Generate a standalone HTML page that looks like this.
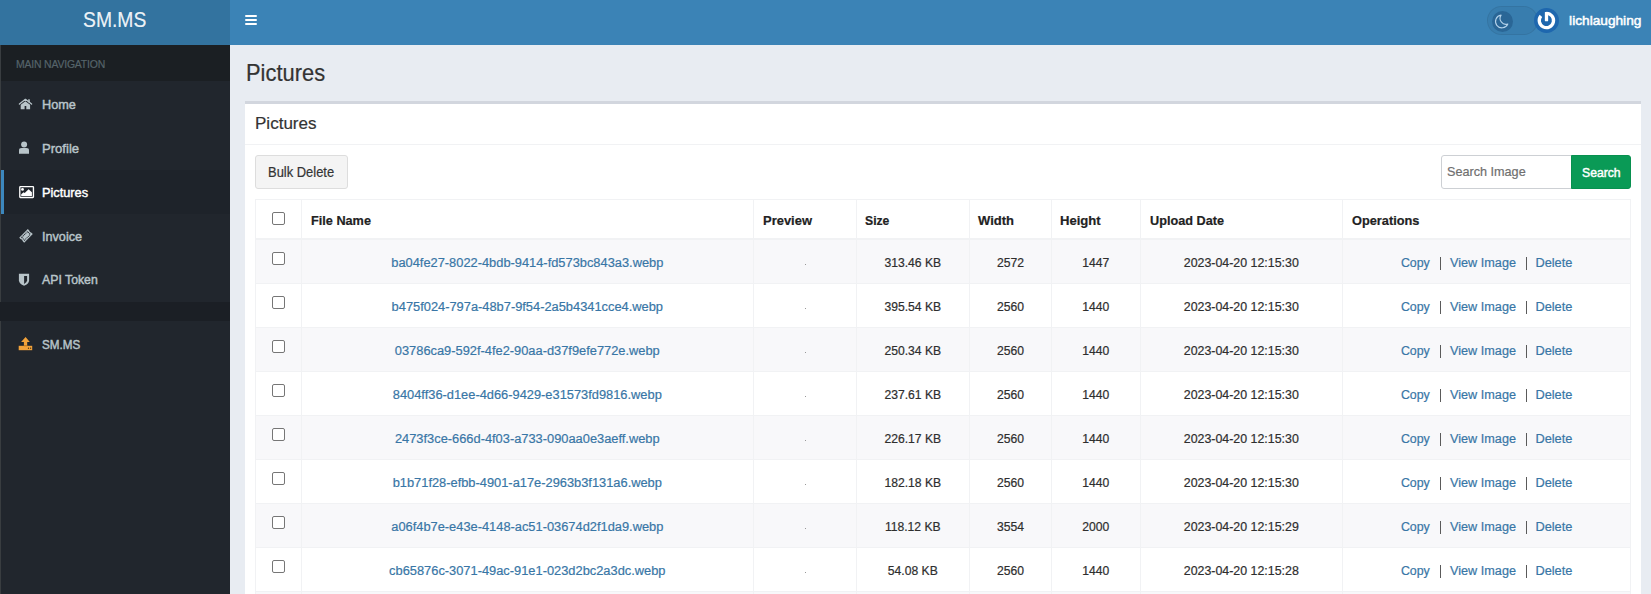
<!DOCTYPE html>
<html><head><meta charset="utf-8"><title>Pictures</title>
<style>
html,body{margin:0;padding:0;}
body{width:1651px;height:594px;overflow:hidden;position:relative;background:#e8ecf2;font-family:"Liberation Sans",sans-serif;}
.t{position:absolute;white-space:nowrap;-webkit-text-stroke:0.2px currentColor;}
.b{position:absolute;}
</style></head><body>
<div class="b" style="left:0px;top:0px;width:230px;height:45px;background:#33739f"></div>
<div class="b" style="left:230px;top:0px;width:1421px;height:45px;background:#3b83b6"></div>
<div class="t" style="left:82.9px;top:9.49px;font-size:22.100px;line-height:22.100px;color:rgba(255,255,255,0.92);font-weight:normal;transform-origin:0 0;transform:scaleX(0.875);transform-origin:0 0">SM.MS</div>
<div class="b" style="left:245px;top:15px;width:12px;height:2px;background:#fff;border-radius:1px"></div>
<div class="b" style="left:245px;top:19px;width:12px;height:2px;background:#fff;border-radius:1px"></div>
<div class="b" style="left:245px;top:23px;width:12px;height:2px;background:#fff;border-radius:1px"></div>
<div class="b" style="left:1487px;top:6px;width:51px;height:29px;background:rgba(0,0,0,0.045);border:1px solid rgba(0,0,0,0.07);box-sizing:border-box;border-radius:15px"></div>
<div class="b" style="left:1491.5px;top:10.5px;width:21.0px;height:21.0px;background:#2a6696;border-radius:50%"></div>
<svg class="b" style="left:1491px;top:10px" width="22" height="22" viewBox="0 0 22 22"><path d="M10.1 5.1 A6.4 6.4 0 1 0 16.8 14 A5.9 5.9 0 0 1 10.1 5.1 Z" fill="none" stroke="#b4d2ea" stroke-width="1.1" stroke-linejoin="round"/></svg>
<div class="b" style="left:1534px;top:8px;width:25px;height:25px;background:#1e67ae;border-radius:50%"></div>
<svg class="b" style="left:1534px;top:8px" width="25" height="25" viewBox="0 0 25 25"><path d="M12.4 5.35 A7.15 7.15 0 1 1 6.92 7.9" fill="none" stroke="#fff" stroke-width="3.3"/><rect x="10.85" y="3.9" width="3.3" height="9.3" rx="0.4" fill="#fff"/></svg>
<div class="t" style="left:1569.1px;top:14.10px;font-size:13.700px;line-height:13.700px;color:#fff;font-weight:normal;transform-origin:0 0;-webkit-text-stroke:0.5px #fff">lichlaughing</div>
<div class="b" style="left:0px;top:45px;width:230px;height:549px;background:#21262d"></div>
<div class="b" style="left:0px;top:45px;width:230px;height:36px;background:#1b1f23"></div>
<div class="t" style="left:16.2px;top:58.83px;font-size:11.181px;line-height:11.181px;color:#56646a;font-weight:normal;transform:scaleX(0.9346);transform-origin:0 0;letter-spacing:-0.2px">MAIN NAVIGATION</div>
<div class="b" style="left:0px;top:170px;width:230px;height:44px;background:#1e232a"></div>
<div class="b" style="left:1px;top:170px;width:3px;height:44px;background:#3c87bd"></div>
<div class="b" style="left:0px;top:45px;width:1px;height:549px;background:#393d40"></div>
<div class="b" style="left:0px;top:302px;width:230px;height:19px;background:#1b1f25"></div>
<div class="t" style="left:42.2px;top:97.63px;font-size:13.081px;line-height:13.081px;color:#b8c4c9;font-weight:normal;transform:scaleX(0.9709);transform-origin:0 0;-webkit-text-stroke:0.45px #b8c4c9">Home</div>
<div class="t" style="left:42.2px;top:141.58px;font-size:13.493px;line-height:13.493px;color:#b8c4c9;font-weight:normal;transform:scaleX(0.9709);transform-origin:0 0;-webkit-text-stroke:0.45px #b8c4c9">Profile</div>
<div class="t" style="left:42.2px;top:185.88px;font-size:13.133px;line-height:13.133px;color:#fff;font-weight:normal;transform:scaleX(0.9709);transform-origin:0 0;-webkit-text-stroke:0.45px #fff">Pictures</div>
<div class="t" style="left:42.2px;top:229.97px;font-size:13.030px;line-height:13.030px;color:#b8c4c9;font-weight:normal;transform:scaleX(0.9709);transform-origin:0 0;-webkit-text-stroke:0.45px #b8c4c9">Invoice</div>
<div class="t" style="left:42.2px;top:274.48px;font-size:12.669px;line-height:12.669px;color:#b8c4c9;font-weight:normal;transform:scaleX(0.9709);transform-origin:0 0;-webkit-text-stroke:0.45px #b8c4c9">API Token</div>
<div class="t" style="left:42.2px;top:339.04px;font-size:12.000px;line-height:12.000px;color:#b8c4c9;font-weight:normal;transform:scaleX(0.9709);transform-origin:0 0;-webkit-text-stroke:0.45px #b8c4c9">SM.MS</div>
<svg class="b" style="left:15px;top:95px" width="20" height="20" viewBox="0 0 20 20"><path d="M5.7 14.2 L5.7 9.8 L10.4 6.2 L15.1 9.8 L15.1 14.2 L11.3 14.2 L11.3 11.1 L9.6 11.1 L9.6 14.2 Z" fill="#b8c4c9"/><rect x="13.2" y="4.3" width="1.6" height="3" fill="#b8c4c9"/><path d="M4.4 9 L10.4 4.3 L16.6 9" fill="none" stroke="#b8c4c9" stroke-width="1.3" stroke-linecap="round" stroke-linejoin="round"/></svg>
<svg class="b" style="left:15px;top:138px" width="20" height="20" viewBox="0 0 20 20"><path d="M4 15.8 L4 12.3 Q4 9.9 6.6 9.9 L11.4 9.9 Q14 9.9 14 12.3 L14 15.8 Z" fill="#b8c4c9"/><circle cx="9.1" cy="6.6" r="3.5" fill="#21262d"/><circle cx="9.1" cy="6.6" r="3.0" fill="#b8c4c9"/></svg>
<svg class="b" style="left:16px;top:182px" width="22" height="22" viewBox="0 0 22 22"><rect x="3.8" y="4.55" width="13.65" height="10.9" rx="0.6" fill="none" stroke="#fff" stroke-width="1.35"/><circle cx="6.5" cy="7.4" r="1.4" fill="#fff"/><path d="M5.2 13.9 L5.2 12.3 L7.6 10.2 L8.7 10.9 L12.6 7.2 L15.9 10.2 L15.9 13.9 Z" fill="#fff"/></svg>
<svg class="b" style="left:16px;top:226px" width="20" height="20" viewBox="0 0 20 20"><g transform="rotate(-45 10 9.9)"><path d="M3.9 6.4 L16.1 6.4 L16.1 8.3 Q15.2 9.9 16.1 11.5 L16.1 13.4 L3.9 13.4 L3.9 11.5 Q4.8 9.9 3.9 8.3 Z" fill="#b8c4c9"/><rect x="5.9" y="7.9" width="8.2" height="4" fill="none" stroke="#21262d" stroke-width="0.95" stroke-dasharray="1.1 0.7"/></g></svg>
<svg class="b" style="left:15px;top:270px" width="20" height="20" viewBox="0 0 20 20"><path d="M3.9 3.7 L14.1 3.7 L14.1 10.3 Q14 14 9.1 15.8 Q4.1 14 3.9 10.3 Z" fill="#b8c4c9"/><path d="M9.1 6 L12.1 6 L12.1 10.2 Q12 12.8 9.1 13.9 Z" fill="#21262d"/></svg>
<svg class="b" style="left:15px;top:333px" width="22" height="22" viewBox="0 0 22 22"><path d="M10.6 3.9 L14.8 8.9 L12.2 8.9 L12.2 13 L8.9 13 L8.9 8.9 L6.1 8.9 Z" fill="#f2a23a"/><rect x="3.7" y="12.8" width="13.5" height="4.4" fill="#f2a23a"/><rect x="8.9" y="12.4" width="3.3" height="0.8" fill="#b86a10"/><circle cx="13.5" cy="15.2" r="0.65" fill="#3a2a10"/><circle cx="15.6" cy="15.2" r="0.65" fill="#3a2a10"/></svg>
<div class="t" style="left:245.6px;top:62.03px;font-size:22.995px;line-height:22.995px;color:#333;font-weight:normal;transform:scaleX(0.9524);transform-origin:0 0;">Pictures</div>
<div class="b" style="left:245px;top:101px;width:1396px;height:493px;background:#fff;border-top:3px solid #d2d6de;box-sizing:border-box"></div>
<div class="b" style="left:245px;top:144px;width:1396px;height:1px;background:#f1f2f4"></div>
<div class="t" style="left:255.4px;top:115.11px;font-size:17.115px;line-height:17.115px;color:#333;font-weight:normal;transform:scaleX(0.9950);transform-origin:0 0;">Pictures</div>
<div class="b" style="left:255px;top:155px;width:93px;height:34px;background:#f4f4f4;border:1px solid #ddd;box-sizing:border-box;border-radius:3px"></div>
<div class="t" style="left:268.3px;top:166.07px;font-size:13.857px;line-height:13.857px;color:#333;font-weight:normal;transform:scaleX(0.9346);transform-origin:0 0;">Bulk Delete</div>
<div class="b" style="left:1441px;top:155px;width:131px;height:34px;background:#fff;border:1px solid #cdd0d4;box-sizing:border-box;border-radius:3px 0 0 3px"></div>
<div class="t" style="left:1447.2px;top:166.28px;font-size:12.903px;line-height:12.903px;color:#6f6f6f;font-weight:normal;transform:scaleX(0.9804);transform-origin:0 0;">Search Image</div>
<div class="b" style="left:1571px;top:155px;width:60px;height:34px;background:#0a9a56;border:1px solid #08904f;box-sizing:border-box;border-radius:0 3px 3px 0"></div>
<div class="t" style="left:1582px;top:166.15px;font-size:13.054px;line-height:13.054px;color:#fff;font-weight:normal;transform:scaleX(0.9346);transform-origin:0 0;-webkit-text-stroke:0.45px #fff">Search</div>
<div class="b" style="left:255px;top:240px;width:1376px;height:44px;background:#f8f8fa"></div>
<div class="b" style="left:255px;top:328px;width:1376px;height:44px;background:#f8f8fa"></div>
<div class="b" style="left:255px;top:416px;width:1376px;height:44px;background:#f8f8fa"></div>
<div class="b" style="left:255px;top:504px;width:1376px;height:44px;background:#f8f8fa"></div>
<div class="b" style="left:255px;top:592px;width:1376px;height:44px;background:#f8f8fa"></div>
<div class="b" style="left:255px;top:199px;width:1376px;height:1px;background:#f1f2f4"></div>
<div class="b" style="left:255px;top:238px;width:1376px;height:2px;background:#f1f2f4"></div>
<div class="b" style="left:255px;top:283px;width:1376px;height:1px;background:#f1f2f4"></div>
<div class="b" style="left:255px;top:327px;width:1376px;height:1px;background:#f1f2f4"></div>
<div class="b" style="left:255px;top:371px;width:1376px;height:1px;background:#f1f2f4"></div>
<div class="b" style="left:255px;top:415px;width:1376px;height:1px;background:#f1f2f4"></div>
<div class="b" style="left:255px;top:459px;width:1376px;height:1px;background:#f1f2f4"></div>
<div class="b" style="left:255px;top:503px;width:1376px;height:1px;background:#f1f2f4"></div>
<div class="b" style="left:255px;top:547px;width:1376px;height:1px;background:#f1f2f4"></div>
<div class="b" style="left:255px;top:591px;width:1376px;height:1px;background:#f1f2f4"></div>
<div class="b" style="left:255px;top:635px;width:1376px;height:1px;background:#f1f2f4"></div>
<div class="b" style="left:255px;top:199px;width:1px;height:395px;background:#f1f2f4"></div>
<div class="b" style="left:301px;top:199px;width:1px;height:395px;background:#f1f2f4"></div>
<div class="b" style="left:753px;top:199px;width:1px;height:395px;background:#f1f2f4"></div>
<div class="b" style="left:856px;top:199px;width:1px;height:395px;background:#f1f2f4"></div>
<div class="b" style="left:969px;top:199px;width:1px;height:395px;background:#f1f2f4"></div>
<div class="b" style="left:1051px;top:199px;width:1px;height:395px;background:#f1f2f4"></div>
<div class="b" style="left:1140px;top:199px;width:1px;height:395px;background:#f1f2f4"></div>
<div class="b" style="left:1342px;top:199px;width:1px;height:395px;background:#f1f2f4"></div>
<div class="b" style="left:1630px;top:199px;width:1px;height:395px;background:#f1f2f4"></div>
<div class="t" style="left:310.5px;top:213.75px;font-size:13.056px;line-height:13.056px;color:#222;font-weight:bold;transform:scaleX(0.9727);transform-origin:0 0;">File Name</div>
<div class="t" style="left:762.8px;top:213.75px;font-size:13.056px;line-height:13.056px;color:#222;font-weight:bold;transform:scaleX(0.9926);transform-origin:0 0;">Preview</div>
<div class="t" style="left:865px;top:213.75px;font-size:13.056px;line-height:13.056px;color:#222;font-weight:bold;transform:scaleX(0.9344);transform-origin:0 0;">Size</div>
<div class="t" style="left:978px;top:213.75px;font-size:13.056px;line-height:13.056px;color:#222;font-weight:bold;transform:scaleX(0.9957);transform-origin:0 0;">Width</div>
<div class="t" style="left:1060.3px;top:213.75px;font-size:13.056px;line-height:13.056px;color:#222;font-weight:bold;transform:scaleX(1.0034);transform-origin:0 0;">Height</div>
<div class="t" style="left:1149.5px;top:213.75px;font-size:13.056px;line-height:13.056px;color:#222;font-weight:bold;transform:scaleX(0.9720);transform-origin:0 0;">Upload Date</div>
<div class="t" style="left:1351.7px;top:213.75px;font-size:13.056px;line-height:13.056px;color:#222;font-weight:bold;transform:scaleX(0.9781);transform-origin:0 0;">Operations</div>
<div class="b" style="left:272px;top:212px;width:13px;height:13px;border:1px solid #767676;box-sizing:border-box;border-radius:2px;background:#fff"></div>
<div class="b" style="left:272px;top:252px;width:13px;height:13px;border:1px solid #767676;box-sizing:border-box;border-radius:2px;background:#fff"></div>
<div class="t" style="left:227.29999999999995px;width:600px;text-align:center;top:257.02px;font-size:12.850px;line-height:12.850px;color:#3876a6;font-weight:normal;transform-origin:50% 0;">ba04fe27-8022-4bdb-9414-fd573bc843a3.webp</div>
<div class="b" style="left:805px;top:264px;width:1px;height:1px;background:#999"></div>
<div class="t" style="left:612.8px;width:600px;text-align:center;top:256.62px;font-size:12.150px;line-height:12.150px;color:#2e2e2e;font-weight:normal;transform-origin:50% 0;">313.46 KB</div>
<div class="t" style="left:710.5px;width:600px;text-align:center;top:256.62px;font-size:12.150px;line-height:12.150px;color:#2e2e2e;font-weight:normal;transform-origin:50% 0;">2572</div>
<div class="t" style="left:795.8px;width:600px;text-align:center;top:256.62px;font-size:12.150px;line-height:12.150px;color:#2e2e2e;font-weight:normal;transform-origin:50% 0;">1447</div>
<div class="t" style="left:941.3px;width:600px;text-align:center;top:257.40px;font-size:12.400px;line-height:12.400px;color:#2e2e2e;font-weight:normal;transform-origin:50% 0;">2023-04-20 12:15:30</div>
<div class="t" style="left:1400.9px;top:257.40px;font-size:12.400px;line-height:12.400px;color:#3876a6;font-weight:normal;transform-origin:0 0;">Copy</div>
<div class="t" style="left:1450px;top:257.17px;font-size:12.680px;line-height:12.680px;color:#3876a6;font-weight:normal;transform-origin:0 0;">View Image</div>
<div class="t" style="left:1535.4px;top:257.06px;font-size:12.800px;line-height:12.800px;color:#3876a6;font-weight:normal;transform-origin:0 0;">Delete</div>
<div class="b" style="left:1439.5px;top:256.7px;width:1.2000000000000455px;height:13.300000000000011px;background:#5a5a5a"></div>
<div class="b" style="left:1525.5px;top:256.7px;width:1.2000000000000455px;height:13.300000000000011px;background:#5a5a5a"></div>
<div class="b" style="left:272px;top:296px;width:13px;height:13px;border:1px solid #767676;box-sizing:border-box;border-radius:2px;background:#fff"></div>
<div class="t" style="left:227.29999999999995px;width:600px;text-align:center;top:301.02px;font-size:12.850px;line-height:12.850px;color:#3876a6;font-weight:normal;transform-origin:50% 0;">b475f024-797a-48b7-9f54-2a5b4341cce4.webp</div>
<div class="b" style="left:805px;top:308px;width:1px;height:1px;background:#999"></div>
<div class="t" style="left:612.8px;width:600px;text-align:center;top:300.62px;font-size:12.150px;line-height:12.150px;color:#2e2e2e;font-weight:normal;transform-origin:50% 0;">395.54 KB</div>
<div class="t" style="left:710.5px;width:600px;text-align:center;top:300.62px;font-size:12.150px;line-height:12.150px;color:#2e2e2e;font-weight:normal;transform-origin:50% 0;">2560</div>
<div class="t" style="left:795.8px;width:600px;text-align:center;top:300.62px;font-size:12.150px;line-height:12.150px;color:#2e2e2e;font-weight:normal;transform-origin:50% 0;">1440</div>
<div class="t" style="left:941.3px;width:600px;text-align:center;top:301.40px;font-size:12.400px;line-height:12.400px;color:#2e2e2e;font-weight:normal;transform-origin:50% 0;">2023-04-20 12:15:30</div>
<div class="t" style="left:1400.9px;top:301.40px;font-size:12.400px;line-height:12.400px;color:#3876a6;font-weight:normal;transform-origin:0 0;">Copy</div>
<div class="t" style="left:1450px;top:301.17px;font-size:12.680px;line-height:12.680px;color:#3876a6;font-weight:normal;transform-origin:0 0;">View Image</div>
<div class="t" style="left:1535.4px;top:301.06px;font-size:12.800px;line-height:12.800px;color:#3876a6;font-weight:normal;transform-origin:0 0;">Delete</div>
<div class="b" style="left:1439.5px;top:300.7px;width:1.2000000000000455px;height:13.300000000000011px;background:#5a5a5a"></div>
<div class="b" style="left:1525.5px;top:300.7px;width:1.2000000000000455px;height:13.300000000000011px;background:#5a5a5a"></div>
<div class="b" style="left:272px;top:340px;width:13px;height:13px;border:1px solid #767676;box-sizing:border-box;border-radius:2px;background:#fff"></div>
<div class="t" style="left:227.29999999999995px;width:600px;text-align:center;top:345.02px;font-size:12.850px;line-height:12.850px;color:#3876a6;font-weight:normal;transform-origin:50% 0;">03786ca9-592f-4fe2-90aa-d37f9efe772e.webp</div>
<div class="b" style="left:805px;top:352px;width:1px;height:1px;background:#999"></div>
<div class="t" style="left:612.8px;width:600px;text-align:center;top:344.62px;font-size:12.150px;line-height:12.150px;color:#2e2e2e;font-weight:normal;transform-origin:50% 0;">250.34 KB</div>
<div class="t" style="left:710.5px;width:600px;text-align:center;top:344.62px;font-size:12.150px;line-height:12.150px;color:#2e2e2e;font-weight:normal;transform-origin:50% 0;">2560</div>
<div class="t" style="left:795.8px;width:600px;text-align:center;top:344.62px;font-size:12.150px;line-height:12.150px;color:#2e2e2e;font-weight:normal;transform-origin:50% 0;">1440</div>
<div class="t" style="left:941.3px;width:600px;text-align:center;top:345.40px;font-size:12.400px;line-height:12.400px;color:#2e2e2e;font-weight:normal;transform-origin:50% 0;">2023-04-20 12:15:30</div>
<div class="t" style="left:1400.9px;top:345.40px;font-size:12.400px;line-height:12.400px;color:#3876a6;font-weight:normal;transform-origin:0 0;">Copy</div>
<div class="t" style="left:1450px;top:345.17px;font-size:12.680px;line-height:12.680px;color:#3876a6;font-weight:normal;transform-origin:0 0;">View Image</div>
<div class="t" style="left:1535.4px;top:345.06px;font-size:12.800px;line-height:12.800px;color:#3876a6;font-weight:normal;transform-origin:0 0;">Delete</div>
<div class="b" style="left:1439.5px;top:344.7px;width:1.2000000000000455px;height:13.300000000000011px;background:#5a5a5a"></div>
<div class="b" style="left:1525.5px;top:344.7px;width:1.2000000000000455px;height:13.300000000000011px;background:#5a5a5a"></div>
<div class="b" style="left:272px;top:384px;width:13px;height:13px;border:1px solid #767676;box-sizing:border-box;border-radius:2px;background:#fff"></div>
<div class="t" style="left:227.29999999999995px;width:600px;text-align:center;top:389.02px;font-size:12.850px;line-height:12.850px;color:#3876a6;font-weight:normal;transform-origin:50% 0;">8404ff36-d1ee-4d66-9429-e31573fd9816.webp</div>
<div class="b" style="left:805px;top:396px;width:1px;height:1px;background:#999"></div>
<div class="t" style="left:612.8px;width:600px;text-align:center;top:388.62px;font-size:12.150px;line-height:12.150px;color:#2e2e2e;font-weight:normal;transform-origin:50% 0;">237.61 KB</div>
<div class="t" style="left:710.5px;width:600px;text-align:center;top:388.62px;font-size:12.150px;line-height:12.150px;color:#2e2e2e;font-weight:normal;transform-origin:50% 0;">2560</div>
<div class="t" style="left:795.8px;width:600px;text-align:center;top:388.62px;font-size:12.150px;line-height:12.150px;color:#2e2e2e;font-weight:normal;transform-origin:50% 0;">1440</div>
<div class="t" style="left:941.3px;width:600px;text-align:center;top:389.40px;font-size:12.400px;line-height:12.400px;color:#2e2e2e;font-weight:normal;transform-origin:50% 0;">2023-04-20 12:15:30</div>
<div class="t" style="left:1400.9px;top:389.40px;font-size:12.400px;line-height:12.400px;color:#3876a6;font-weight:normal;transform-origin:0 0;">Copy</div>
<div class="t" style="left:1450px;top:389.17px;font-size:12.680px;line-height:12.680px;color:#3876a6;font-weight:normal;transform-origin:0 0;">View Image</div>
<div class="t" style="left:1535.4px;top:389.06px;font-size:12.800px;line-height:12.800px;color:#3876a6;font-weight:normal;transform-origin:0 0;">Delete</div>
<div class="b" style="left:1439.5px;top:388.7px;width:1.2000000000000455px;height:13.300000000000011px;background:#5a5a5a"></div>
<div class="b" style="left:1525.5px;top:388.7px;width:1.2000000000000455px;height:13.300000000000011px;background:#5a5a5a"></div>
<div class="b" style="left:272px;top:428px;width:13px;height:13px;border:1px solid #767676;box-sizing:border-box;border-radius:2px;background:#fff"></div>
<div class="t" style="left:227.29999999999995px;width:600px;text-align:center;top:433.02px;font-size:12.850px;line-height:12.850px;color:#3876a6;font-weight:normal;transform-origin:50% 0;">2473f3ce-666d-4f03-a733-090aa0e3aeff.webp</div>
<div class="b" style="left:805px;top:440px;width:1px;height:1px;background:#999"></div>
<div class="t" style="left:612.8px;width:600px;text-align:center;top:432.62px;font-size:12.150px;line-height:12.150px;color:#2e2e2e;font-weight:normal;transform-origin:50% 0;">226.17 KB</div>
<div class="t" style="left:710.5px;width:600px;text-align:center;top:432.62px;font-size:12.150px;line-height:12.150px;color:#2e2e2e;font-weight:normal;transform-origin:50% 0;">2560</div>
<div class="t" style="left:795.8px;width:600px;text-align:center;top:432.62px;font-size:12.150px;line-height:12.150px;color:#2e2e2e;font-weight:normal;transform-origin:50% 0;">1440</div>
<div class="t" style="left:941.3px;width:600px;text-align:center;top:433.40px;font-size:12.400px;line-height:12.400px;color:#2e2e2e;font-weight:normal;transform-origin:50% 0;">2023-04-20 12:15:30</div>
<div class="t" style="left:1400.9px;top:433.40px;font-size:12.400px;line-height:12.400px;color:#3876a6;font-weight:normal;transform-origin:0 0;">Copy</div>
<div class="t" style="left:1450px;top:433.17px;font-size:12.680px;line-height:12.680px;color:#3876a6;font-weight:normal;transform-origin:0 0;">View Image</div>
<div class="t" style="left:1535.4px;top:433.06px;font-size:12.800px;line-height:12.800px;color:#3876a6;font-weight:normal;transform-origin:0 0;">Delete</div>
<div class="b" style="left:1439.5px;top:432.7px;width:1.2000000000000455px;height:13.300000000000011px;background:#5a5a5a"></div>
<div class="b" style="left:1525.5px;top:432.7px;width:1.2000000000000455px;height:13.300000000000011px;background:#5a5a5a"></div>
<div class="b" style="left:272px;top:472px;width:13px;height:13px;border:1px solid #767676;box-sizing:border-box;border-radius:2px;background:#fff"></div>
<div class="t" style="left:227.29999999999995px;width:600px;text-align:center;top:477.02px;font-size:12.850px;line-height:12.850px;color:#3876a6;font-weight:normal;transform-origin:50% 0;">b1b71f28-efbb-4901-a17e-2963b3f131a6.webp</div>
<div class="b" style="left:805px;top:484px;width:1px;height:1px;background:#999"></div>
<div class="t" style="left:612.8px;width:600px;text-align:center;top:476.62px;font-size:12.150px;line-height:12.150px;color:#2e2e2e;font-weight:normal;transform-origin:50% 0;">182.18 KB</div>
<div class="t" style="left:710.5px;width:600px;text-align:center;top:476.62px;font-size:12.150px;line-height:12.150px;color:#2e2e2e;font-weight:normal;transform-origin:50% 0;">2560</div>
<div class="t" style="left:795.8px;width:600px;text-align:center;top:476.62px;font-size:12.150px;line-height:12.150px;color:#2e2e2e;font-weight:normal;transform-origin:50% 0;">1440</div>
<div class="t" style="left:941.3px;width:600px;text-align:center;top:477.40px;font-size:12.400px;line-height:12.400px;color:#2e2e2e;font-weight:normal;transform-origin:50% 0;">2023-04-20 12:15:30</div>
<div class="t" style="left:1400.9px;top:477.40px;font-size:12.400px;line-height:12.400px;color:#3876a6;font-weight:normal;transform-origin:0 0;">Copy</div>
<div class="t" style="left:1450px;top:477.17px;font-size:12.680px;line-height:12.680px;color:#3876a6;font-weight:normal;transform-origin:0 0;">View Image</div>
<div class="t" style="left:1535.4px;top:477.06px;font-size:12.800px;line-height:12.800px;color:#3876a6;font-weight:normal;transform-origin:0 0;">Delete</div>
<div class="b" style="left:1439.5px;top:476.7px;width:1.2000000000000455px;height:13.300000000000011px;background:#5a5a5a"></div>
<div class="b" style="left:1525.5px;top:476.7px;width:1.2000000000000455px;height:13.300000000000011px;background:#5a5a5a"></div>
<div class="b" style="left:272px;top:516px;width:13px;height:13px;border:1px solid #767676;box-sizing:border-box;border-radius:2px;background:#fff"></div>
<div class="t" style="left:227.29999999999995px;width:600px;text-align:center;top:521.02px;font-size:12.850px;line-height:12.850px;color:#3876a6;font-weight:normal;transform-origin:50% 0;">a06f4b7e-e43e-4148-ac51-03674d2f1da9.webp</div>
<div class="b" style="left:805px;top:528px;width:1px;height:1px;background:#999"></div>
<div class="t" style="left:612.8px;width:600px;text-align:center;top:520.62px;font-size:12.150px;line-height:12.150px;color:#2e2e2e;font-weight:normal;transform-origin:50% 0;">118.12 KB</div>
<div class="t" style="left:710.5px;width:600px;text-align:center;top:520.62px;font-size:12.150px;line-height:12.150px;color:#2e2e2e;font-weight:normal;transform-origin:50% 0;">3554</div>
<div class="t" style="left:795.8px;width:600px;text-align:center;top:520.62px;font-size:12.150px;line-height:12.150px;color:#2e2e2e;font-weight:normal;transform-origin:50% 0;">2000</div>
<div class="t" style="left:941.3px;width:600px;text-align:center;top:521.40px;font-size:12.400px;line-height:12.400px;color:#2e2e2e;font-weight:normal;transform-origin:50% 0;">2023-04-20 12:15:29</div>
<div class="t" style="left:1400.9px;top:521.40px;font-size:12.400px;line-height:12.400px;color:#3876a6;font-weight:normal;transform-origin:0 0;">Copy</div>
<div class="t" style="left:1450px;top:521.17px;font-size:12.680px;line-height:12.680px;color:#3876a6;font-weight:normal;transform-origin:0 0;">View Image</div>
<div class="t" style="left:1535.4px;top:521.06px;font-size:12.800px;line-height:12.800px;color:#3876a6;font-weight:normal;transform-origin:0 0;">Delete</div>
<div class="b" style="left:1439.5px;top:520.7px;width:1.2000000000000455px;height:13.299999999999955px;background:#5a5a5a"></div>
<div class="b" style="left:1525.5px;top:520.7px;width:1.2000000000000455px;height:13.299999999999955px;background:#5a5a5a"></div>
<div class="b" style="left:272px;top:560px;width:13px;height:13px;border:1px solid #767676;box-sizing:border-box;border-radius:2px;background:#fff"></div>
<div class="t" style="left:227.29999999999995px;width:600px;text-align:center;top:565.02px;font-size:12.850px;line-height:12.850px;color:#3876a6;font-weight:normal;transform-origin:50% 0;">cb65876c-3071-49ac-91e1-023d2bc2a3dc.webp</div>
<div class="b" style="left:805px;top:572px;width:1px;height:1px;background:#999"></div>
<div class="t" style="left:612.8px;width:600px;text-align:center;top:564.62px;font-size:12.150px;line-height:12.150px;color:#2e2e2e;font-weight:normal;transform-origin:50% 0;">54.08 KB</div>
<div class="t" style="left:710.5px;width:600px;text-align:center;top:564.62px;font-size:12.150px;line-height:12.150px;color:#2e2e2e;font-weight:normal;transform-origin:50% 0;">2560</div>
<div class="t" style="left:795.8px;width:600px;text-align:center;top:564.62px;font-size:12.150px;line-height:12.150px;color:#2e2e2e;font-weight:normal;transform-origin:50% 0;">1440</div>
<div class="t" style="left:941.3px;width:600px;text-align:center;top:565.40px;font-size:12.400px;line-height:12.400px;color:#2e2e2e;font-weight:normal;transform-origin:50% 0;">2023-04-20 12:15:28</div>
<div class="t" style="left:1400.9px;top:565.40px;font-size:12.400px;line-height:12.400px;color:#3876a6;font-weight:normal;transform-origin:0 0;">Copy</div>
<div class="t" style="left:1450px;top:565.17px;font-size:12.680px;line-height:12.680px;color:#3876a6;font-weight:normal;transform-origin:0 0;">View Image</div>
<div class="t" style="left:1535.4px;top:565.06px;font-size:12.800px;line-height:12.800px;color:#3876a6;font-weight:normal;transform-origin:0 0;">Delete</div>
<div class="b" style="left:1439.5px;top:564.7px;width:1.2000000000000455px;height:13.299999999999955px;background:#5a5a5a"></div>
<div class="b" style="left:1525.5px;top:564.7px;width:1.2000000000000455px;height:13.299999999999955px;background:#5a5a5a"></div>
<div class="b" style="left:272px;top:604px;width:13px;height:13px;border:1px solid #767676;box-sizing:border-box;border-radius:2px;background:#fff"></div>
</body></html>
